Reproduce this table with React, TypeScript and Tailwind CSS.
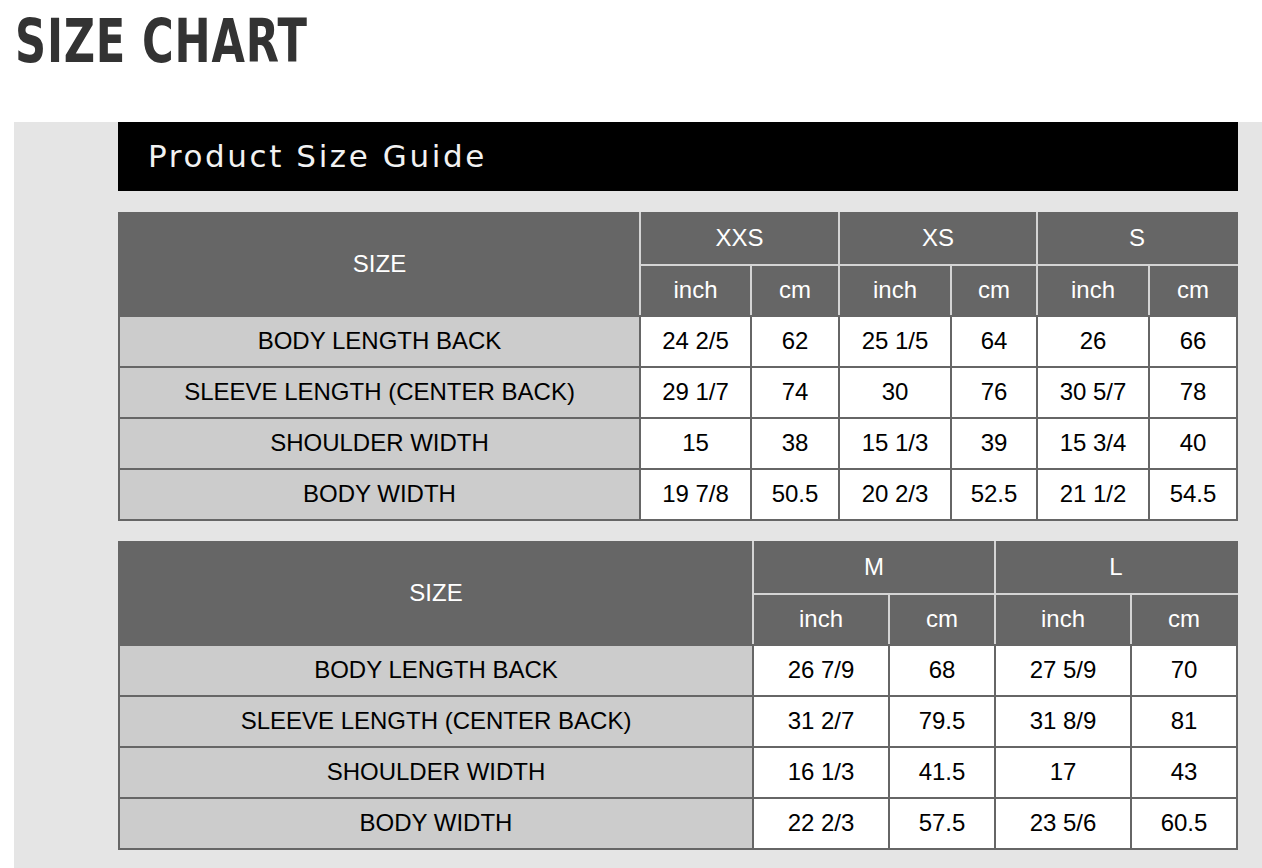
const table1 = {
  sizes: ['XXS', 'XS', 'S'],
  widths: [521, 111, 88, 112, 86, 112, 88],
  rows: [
    ['BODY LENGTH BACK', '24 2/5', '62', '25 1/5', '64', '26', '66'],
    ['SLEEVE LENGTH (CENTER BACK)', '29 1/7', '74', '30', '76', '30 5/7', '78'],
    ['SHOULDER WIDTH', '15', '38', '15 1/3', '39', '15 3/4', '40'],
    ['BODY WIDTH', '19 7/8', '50.5', '20 2/3', '52.5', '21 1/2', '54.5'],
  ],
};

const table2 = {
  sizes: ['M', 'L'],
  widths: [634, 136, 106, 136, 106],
  rows: [
    ['BODY LENGTH BACK', '26 7/9', '68', '27 5/9', '70'],
    ['SLEEVE LENGTH (CENTER BACK)', '31 2/7', '79.5', '31 8/9', '81'],
    ['SHOULDER WIDTH', '16 1/3', '41.5', '17', '43'],
    ['BODY WIDTH', '22 2/3', '57.5', '23 5/6', '60.5'],
  ],
};

type TableData = { sizes: string[]; widths: number[]; rows: string[][] };

function SizeTable({ data }: { data: TableData }) {
  return (
    <table className="w-[1119px] table-fixed border-collapse text-[24px] leading-none" style={{ fontFamily: '"Liberation Sans", Arial, sans-serif' }}>
      <colgroup>
        {data.widths.map((w, i) => (
          <col key={i} style={{ width: w }} />
        ))}
      </colgroup>
      <thead>
        <tr className="h-[52px] bg-[#666666] text-white">
          <th rowSpan={2} className="pb-[2px] border-2 border-[#666666] border-r-[#d4d4d4] font-normal">
            SIZE
          </th>
          {data.sizes.map(s => (
            <th key={s} colSpan={2} className="pb-[3px] border-2 border-[#666666] border-x-[#d4d4d4] border-b-[#d4d4d4] font-normal last:border-r-[#666666]">
              {s}
            </th>
          ))}
        </tr>
        <tr className="h-[51px] bg-[#666666] text-white">
          {data.sizes.flatMap(s => [
            <th key={s + 'i'} className="pb-[2px] border-2 border-[#666666] border-x-[#d4d4d4] border-t-[#d4d4d4] font-normal">inch</th>,
            <th key={s + 'c'} className="pb-[2px] border-2 border-[#666666] border-x-[#d4d4d4] border-t-[#d4d4d4] font-normal last:border-r-[#666666]">cm</th>,
          ])}
        </tr>
      </thead>
      <tbody>
        {data.rows.map(row => (
          <tr key={row[0]} className="h-[51px]">
            {row.map((cell, i) => (
              <td
                key={i}
                className={`pb-[2px] border-2 border-[#666666] text-center text-black ${i === 0 ? 'bg-[#cccccc]' : 'bg-white'}`}
              >
                {cell}
              </td>
            ))}
          </tr>
        ))}
      </tbody>
    </table>
  );
}

export default function App() {
  return (
    <div className="w-[1262px] h-[868px] bg-white overflow-hidden">
      <div className="pl-[15px] pt-[9px] h-[122px]">
        <h1
          className="inline-block origin-left scale-x-[0.8] text-[60px] font-bold text-[#333333] leading-[64px] tracking-[1px]"
          style={{ fontFamily: '"DejaVu Sans Condensed", "DejaVu Sans", sans-serif' }}
        >
          SIZE CHART
        </h1>
      </div>
      <div className="ml-[14px] h-[746px] bg-[#e5e5e5] pl-[104px]">
        <div className="w-[1120px] h-[69px] bg-black flex items-center pl-[30px]">
          <span
            className="text-[31px] text-[#f2f2f2] tracking-[2.6px]"
            style={{ fontFamily: '"DejaVu Sans", sans-serif' }}
          >
            Product Size Guide
          </span>
        </div>
        <div className="pt-[21px]">
          <SizeTable data={table1} />
        </div>
        <div className="pt-[20px]">
          <SizeTable data={table2} />
        </div>
      </div>
    </div>
  );
}
